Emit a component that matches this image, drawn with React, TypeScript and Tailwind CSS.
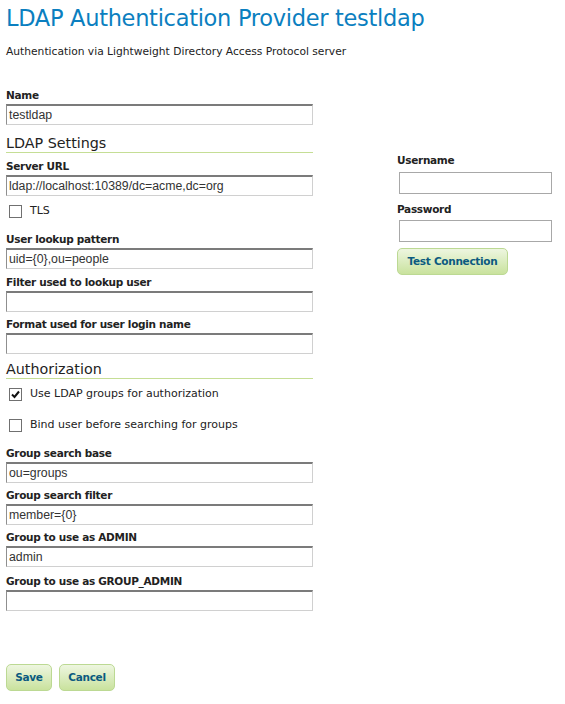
import React from "react";

const verd = { fontFamily: '"DejaVu Sans", Verdana, sans-serif' };

function Label({ children, className = "" }: { children: React.ReactNode; className?: string }) {
  return (
    <div
      className={"h-[14px] text-[10.5px] leading-[14px] font-bold text-[#222] tracking-[-0.3px] " + className}
      style={verd}
    >
      {children}
    </div>
  );
}

function Input({ value = "" }: { value?: string }) {
  return (
    <div
      className="mt-[2px] h-[21px] w-[307px] border-t-2 border-l border-t-[#7b7b7b] border-l-[#8f8f8f] border-r border-b border-r-[#d0d0d0] border-b-[#d0d0d0] bg-white pl-[2px] text-[12.3px] leading-[18px] text-[#333]"
      style={{ fontFamily: '"Liberation Sans", Arial, sans-serif' }}
    >
      {value}
    </div>
  );
}

function Field({ label, value, className = "mt-[5px]" }: { label: string; value?: string; className?: string }) {
  return (
    <div className={className}>
      <Label>{label}</Label>
      <Input value={value} />
    </div>
  );
}

function Check({ checked, label }: { checked?: boolean; label: string }) {
  return (
    <div className="flex h-[14px] items-center pl-[3px]">
      <div className="flex h-[13px] w-[13px] items-center justify-center border border-[#707070] bg-white">
        {checked && (
          <svg width="9" height="9" viewBox="0 0 9 9">
            <path d="M1 4.5 L3.5 7 L8 1.5" fill="none" stroke="#111" strokeWidth="2" />
          </svg>
        )}
      </div>
      <span className="ml-[8px] text-[11px] text-[#222]" style={{ fontFamily: '"DejaVu Sans", Tahoma, sans-serif' }}>
        {label}
      </span>
    </div>
  );
}

function Heading({ children, className = "" }: { children: React.ReactNode; className?: string }) {
  return (
    <div className={"w-[307px] border-b border-b-[#c5de95] " + className}>
      <div className="text-[14.3px] leading-[18px] text-[#222]" style={verd}>
        {children}
      </div>
    </div>
  );
}

function Btn({ children, className = "" }: { children: React.ReactNode; className?: string }) {
  return (
    <div
      className={
        "flex h-[27px] items-center justify-center rounded-[5px] border border-[#bcd993] bg-gradient-to-b from-[#eef6e0] to-[#c9e29d] text-[10.5px] font-bold tracking-[-0.3px] text-[#0b5a80] " +
        className
      }
      style={verd}
    >
      {children}
    </div>
  );
}

export default function App() {
  return (
    <div className="min-h-[704px] w-[565px] bg-white px-[6px] pt-[4px]">
      <div className="text-[22.5px] leading-[28px] text-[#0b7fc0]" style={{ fontFamily: '"DejaVu Sans", Tahoma, sans-serif', letterSpacing: "-0.3px" }}>
        LDAP Authentication Provider testldap
      </div>
      <div className="mt-[13px] text-[10.7px] leading-[14px] text-[#222]" style={verd}>
        Authentication via Lightweight Directory Access Protocol server
      </div>
      <div className="mt-[29px] flex">
        <div className="w-[307px]">
          <Field className="" label="Name" value="testldap" />
          <Heading className="mt-[9px]">LDAP Settings</Heading>
          <Field className="mt-[6px]" label="Server URL" value="ldap://localhost:10389/dc=acme,dc=org" />
          <div className="mt-[8px]">
            <Check label="TLS" />
          </div>
          <div className="mt-[14px]">
            <Label>User lookup pattern</Label>
            <Input value="uid={0},ou=people" />
          </div>
          <Field className="mt-[6px]" label="Filter used to lookup user" />
          <Field label="Format used for user login name" />
          <Heading className="mt-[6px]">Authorization</Heading>
          <div className="mt-[8px]">
            <Check checked label="Use LDAP groups for authorization" />
          </div>
          <div className="mt-[17px]">
            <Check label="Bind user before searching for groups" />
          </div>
          <div className="mt-[14px]">
            <Label>Group search base</Label>
            <Input value="ou=groups" />
          </div>
          <Field label="Group search filter" value="member={0}" />
          <Field label="Group to use as ADMIN" value="admin" />
          <Field className="mt-[7px]" label="Group to use as GROUP_ADMIN" />
          <div className="mt-[53px] flex gap-[7px]">
            <Btn className="w-[46px]">Save</Btn>
            <Btn className="w-[56px]">Cancel</Btn>
          </div>
        </div>
        <div className="ml-[85px] mt-[65px] w-[160px]">
          <Label className="ml-[-1px]">Username</Label>
          <div className="ml-[1px] mt-[5px] h-[22px] w-[153px] border border-[#a8a8a8] bg-white" />
          <Label className="ml-[-1px] mt-[8px]">Password</Label>
          <div className="ml-[1px] mt-[4px] h-[22px] w-[153px] border border-[#a8a8a8] bg-white" />
          <Btn className="ml-[-1px] mt-[6px] w-[111px]">Test Connection</Btn>
        </div>
      </div>
    </div>
  );
}
